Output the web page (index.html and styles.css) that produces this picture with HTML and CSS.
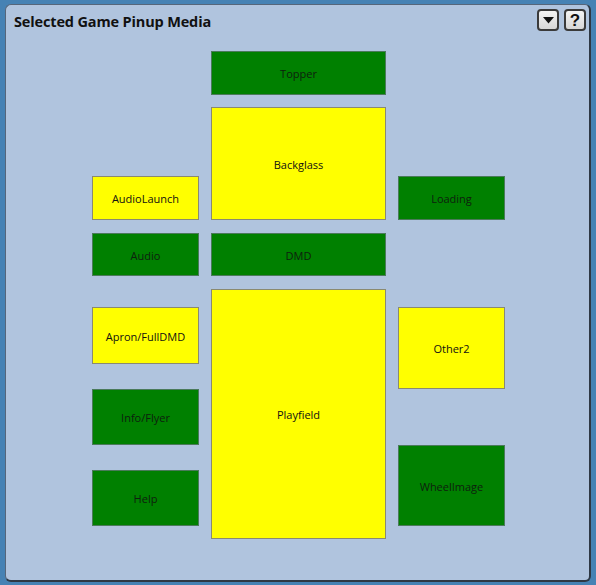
FILE: index.html
```html
<!DOCTYPE html>
<html>
<head>
<meta charset="utf-8">
<link rel="stylesheet" href="styles.css">
</head>
<body>
<div class="panel">
  <div class="header">
    <div class="title">Selected Game Pinup Media</div>
    <div class="tools">
      <button class="tool"><svg width="11" height="7" viewBox="0 0 11 7"><path d="M0 0H11L5.5 6.5Z" fill="#111"/></svg></button>
      <button class="tool q">?</button>
    </div>
  </div>
  <div class="map">
    <div class="box g topper">Topper</div>
    <div class="box y backglass">Backglass</div>
    <div class="box y audiolaunch">AudioLaunch</div>
    <div class="box g loading">Loading</div>
    <div class="box g audio">Audio</div>
    <div class="box g dmd">DMD</div>
    <div class="box y apron">Apron/FullDMD</div>
    <div class="box y playfield">Playfield</div>
    <div class="box y other2">Other2</div>
    <div class="box g info">Info/Flyer</div>
    <div class="box g help">Help</div>
    <div class="box g wheel">WheelImage</div>
  </div>
</div>
</body>
</html>
```
FILE: styles.css
```css
html, body {
  margin: 0;
  padding: 0;
  background: #4682b4;
  width: 596px;
  height: 585px;
  overflow: hidden;
}
.panel {
  box-sizing: border-box;
  margin: 4px 0 0 5px;
  width: 586px;
  height: 578px;
  background: #b0c4de;
  border-style: solid;
  border-width: 1px 2px 2px 1px;
  border-color: #56667a #2e3844 #2e3844 #56667a;
  border-radius: 6px;
}
.header {
  display: flex;
  justify-content: space-between;
  align-items: flex-start;
  padding: 4px 3px 0 8px;
  height: 22px;
}
.title {
  font-family: "Open Sans", "Noto Sans", sans-serif;
  font-weight: bold;
  font-size: 14.5px;
  letter-spacing: -0.15px;
  color: #111;
  margin-top: 3px;
  line-height: 20px;
}
.tools {
  display: flex;
  gap: 5px;
}
.tool {
  box-sizing: border-box;
  width: 22px;
  height: 22px;
  padding: 0;
  margin: 0;
  border: 2px solid #3a3a3a;
  border-radius: 4px;
  background: linear-gradient(#f4f4f4, #d6d6d6);
  display: flex;
  align-items: center;
  justify-content: center;
}
.tool.q {
  font-family: "Liberation Sans", sans-serif;
  font-weight: bold;
  font-size: 17px;
  color: #111;
  line-height: 1;
}
.map {
  display: grid;
  width: 413px;
  margin: 20px 0 0 86px;
  grid-template-columns: 107px 175px 107px;
  column-gap: 12px;
  grid-template-rows: 44px 12px 69px 44px 13px 43px 13px 18px 57px 25px 56px 25px 56px 13px;
}
.box {
  box-sizing: border-box;
  display: flex;
  align-items: center;
  justify-content: center;
  padding-top: 1px;
  font-family: "Open Sans", "Noto Sans", sans-serif;
  font-size: 11px;
  color: #111;
  border: 1px solid;
}
.g {
  background: #008000;
  border-color: #4a7a5a;
  color: #0e200e;
}
.y {
  background: #ffff00;
  border-color: #8a8a70;
}
.topper { grid-column: 2; grid-row: 1 / 2; }
.backglass { grid-column: 2; grid-row: 3 / 5; }
.audiolaunch { grid-column: 1; grid-row: 4 / 5; }
.loading { grid-column: 3; grid-row: 4 / 5; }
.audio { grid-column: 1; grid-row: 6 / 7; }
.dmd { grid-column: 2; grid-row: 6 / 7; }
.apron { grid-column: 1; grid-row: 9 / 10; }
.playfield { grid-column: 2; grid-row: 8 / 15; }
.other2 { grid-column: 3; grid-row: 9 / 11; }
.info { grid-column: 1; grid-row: 11 / 12; }
.help { grid-column: 1; grid-row: 13 / 14; }
.wheel { grid-column: 3; grid-row: 12 / 14; }
```
